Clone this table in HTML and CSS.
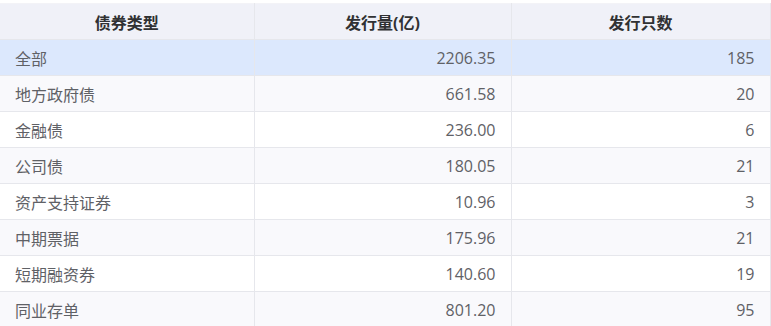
FILE: index.html
```html
<!DOCTYPE html>
<html lang="zh-CN">
<head>
    <meta charset="UTF-8">
    <title>债券发行统计</title>
    <link rel="stylesheet" href="styles.css">
</head>
<body>
    <!-- 债券发行统计表 -->
    <table class="bond-table">
        <colgroup>
            <col class="col-type">
            <col class="col-amount">
            <col class="col-count">
        </colgroup>
        <thead>
            <tr>
                <th>债券类型</th>
                <th>发行量(亿)</th>
                <th>发行只数</th>
            </tr>
        </thead>
        <tbody>
            <tr class="active">
                <td>全部</td>
                <td class="num">2206.35</td>
                <td class="num">185</td>
            </tr>
            <tr>
                <td>地方政府债</td>
                <td class="num">661.58</td>
                <td class="num">20</td>
            </tr>
            <tr>
                <td>金融债</td>
                <td class="num">236.00</td>
                <td class="num">6</td>
            </tr>
            <tr>
                <td>公司债</td>
                <td class="num">180.05</td>
                <td class="num">21</td>
            </tr>
            <tr>
                <td>资产支持证券</td>
                <td class="num">10.96</td>
                <td class="num">3</td>
            </tr>
            <tr>
                <td>中期票据</td>
                <td class="num">175.96</td>
                <td class="num">21</td>
            </tr>
            <tr>
                <td>短期融资券</td>
                <td class="num">140.60</td>
                <td class="num">19</td>
            </tr>
            <tr>
                <td>同业存单</td>
                <td class="num">801.20</td>
                <td class="num">95</td>
            </tr>
        </tbody>
    </table>
</body>
</html>
```

FILE: styles.css
```css
body {
    margin: 0;
    padding-top: 3px;
    font-family: "Open Sans", "Noto Sans CJK SC", sans-serif;
    background-color: #fff;
}

.bond-table {
    width: 770px;
    border-collapse: collapse;
    table-layout: fixed;
    font-size: 16px;
}

.col-type {
    width: 254px;
}

.col-amount {
    width: 257px;
}

.col-count {
    width: 259px;
}

.bond-table th,
.bond-table td {
    height: 36px;
    padding: 0 15px;
    border: 1px solid #e6e7ec;
    box-sizing: border-box;
}

.bond-table tr > :first-child {
    border-left: none;
}

.bond-table th {
    background-color: #f0f1f8;
    color: #303133;
    font-weight: bold;
    text-align: center;
    border-top: 1px solid #f3f3f7;
}

.bond-table td {
    color: #5f6166;
    text-align: left;
}

.bond-table td.num {
    text-align: right;
}

.bond-table tbody tr:nth-child(even) {
    background-color: #f9f9fc;
}

.bond-table tbody tr:nth-child(odd) {
    background-color: #fff;
}

.bond-table tbody tr.active {
    background-color: #dce8fd;
}
```
